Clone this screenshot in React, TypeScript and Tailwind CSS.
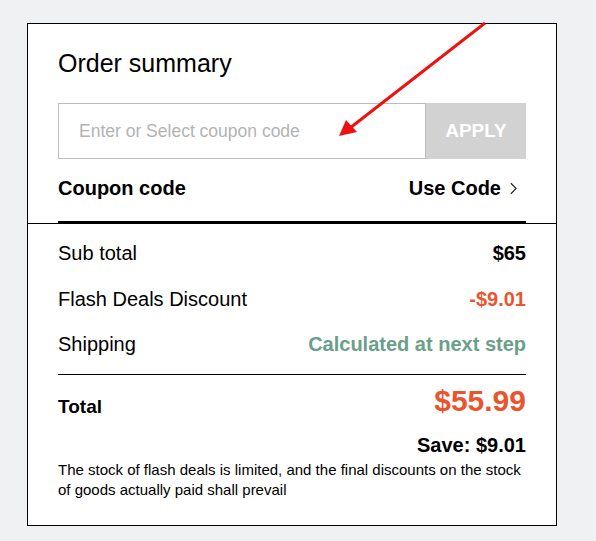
import { useState } from 'react';

const font = { fontFamily: '"Liberation Sans", Arial, sans-serif' };

export default function App() {
  const [code, setCode] = useState('');

  return (
    <div
      className="min-h-[541px] w-full bg-[#f0f1f3] pl-[27px] pt-[23px]"
      style={font}
    >
      <div className="relative w-[530px] border border-black bg-white text-black">
        {/* coupon section */}
        <div className="border-b border-black px-[30px] pt-[24px]">
          <h2 className="text-[25px] leading-[30px]">Order summary</h2>
          <div className="mt-[25px] flex h-[56px]">
            <input
              value={code}
              onChange={(e) => setCode(e.target.value)}
              placeholder="Enter or Select coupon code"
              className="h-full flex-1 border border-[#bcbcbc] px-[20px] text-[17.5px] outline-none placeholder:text-[#b3b3b3]"
            />
            <button className="h-full w-[100px] bg-[#d2d2d2] text-[19px] font-bold text-white">
              APPLY
            </button>
          </div>
          <div className="mt-[14px] flex h-[30px] items-center justify-between">
            <span className="text-[20px] font-bold">Coupon code</span>
            <button className="mr-[9px] flex items-center text-[20px] font-bold">
              Use Code
              <svg
                viewBox="0 0 8 14"
                className="ml-[9px] h-[13px] w-[7px]"
                fill="none"
                stroke="#222"
                strokeWidth="1.3"
              >
                <path d="M1 1l6 6-6 6" />
              </svg>
            </button>
          </div>
          <div className="mt-[18px] border-b-2 border-black" />
        </div>

        {/* totals section */}
        <div className="px-[30px] pb-[25px] pt-[6px]">
          <div className="flex h-[46px] items-center justify-between text-[20px]">
            <span>Sub total</span>
            <span className="font-bold">$65</span>
          </div>
          <div className="flex h-[45px] items-center justify-between text-[20px]">
            <span>Flash Deals Discount</span>
            <span className="font-bold text-[#e8552f]">-$9.01</span>
          </div>
          <div className="flex h-[46px] items-center justify-between text-[20px]">
            <span>Shipping</span>
            <span className="font-bold text-[#6a9f8a]">Calculated at next step</span>
          </div>
          <div className="mt-[7px] border-t border-black" />
          <div className="flex items-end justify-between pt-[8px]">
            <span className="text-[19px] font-bold leading-[24px]">Total</span>
            <span className="text-[30px] font-bold leading-[36px] text-[#e8552f]">
              $55.99
            </span>
          </div>
          <div className="mt-[14px] text-right text-[20px] font-bold leading-[24px]">
            Save: $9.01
          </div>
          <p className="mt-[3px] text-[15px] leading-[20px]">
            The stock of flash deals is limited, and the final discounts on the
            stock of goods actually paid shall prevail
          </p>
        </div>

        {/* annotation arrow */}
        <svg
          className="pointer-events-none absolute left-0 top-[-2px] h-[120px] w-[470px]"
          viewBox="0 0 470 120"
        >
          <line x1="457" y1="1" x2="322" y2="106" stroke="#ee1111" strokeWidth="3" />
          <polygon points="311,114 318,98 329,110" fill="#ee1111" />
        </svg>
      </div>
    </div>
  );
}
